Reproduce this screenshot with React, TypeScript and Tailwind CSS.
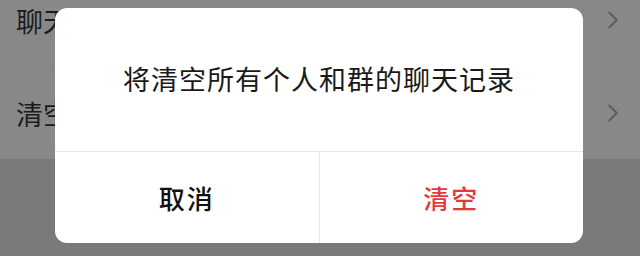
import { ChevronRight } from "lucide-react";

const font = { fontFamily: '"Noto Sans CJK SC", "Noto Sans", sans-serif' };

function SettingRow({ label }: { label: string }) {
  return (
    <div className="flex h-[92px] items-center justify-between pl-4 pr-[12px]">
      <span className="text-[27px] leading-none text-[#1c1c1c]">{label}</span>
      <ChevronRight className="h-[30px] w-[30px] text-[#5c5c5c]" strokeWidth={1.5} />
    </div>
  );
}

export default function App() {
  return (
    <div className="relative h-[256px] w-[640px] overflow-hidden bg-[#7a7a7a]" style={font}>
      {/* page behind the mask */}
      <div className="-mt-[26px] flex flex-col bg-[#888888]">
        <SettingRow label="聊天文件" />
        <div className="h-px bg-[#838383]" />
        <SettingRow label="清空聊天记录" />
      </div>

      {/* confirm dialog */}
      <div className="absolute left-[55px] top-[8px] flex h-[235px] w-[528px] flex-col overflow-hidden rounded-[12px] bg-white">
        <div className="flex h-[143px] items-center justify-center pb-[2px]">
          <p className="text-[27px] leading-none tracking-[1px] text-[#1a1a1a]">将清空所有个人和群的聊天记录</p>
        </div>
        <div className="h-px bg-[#e6e6e6]" />
        <div className="flex flex-1">
          <button className="flex flex-1 items-center justify-center text-[26px] font-medium leading-none tracking-[2px] text-[#111111]">
            取消
          </button>
          <div className="w-px bg-[#e6e6e6]" />
          <button className="flex flex-1 items-center justify-center text-[26px] font-medium leading-none tracking-[2px] text-[#e4393c]">
            清空
          </button>
        </div>
      </div>
    </div>
  );
}
